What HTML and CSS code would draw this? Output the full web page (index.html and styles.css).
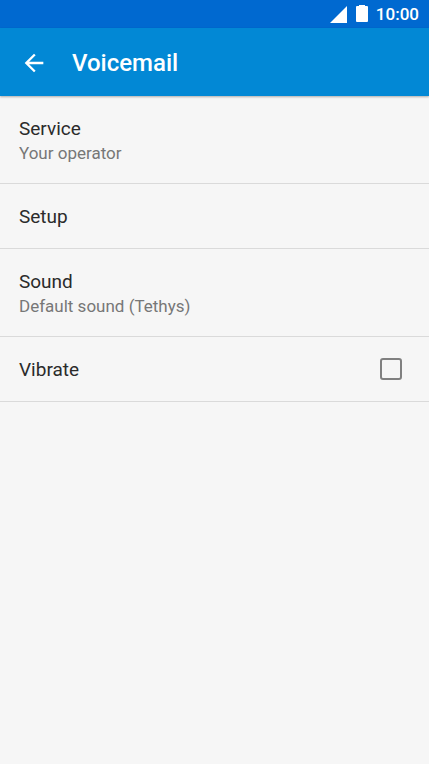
FILE: index.html
```html
<!DOCTYPE html>
<html lang="en">
<head>
<meta charset="utf-8">
<meta name="viewport" content="width=device-width, initial-scale=1">
<title>Voicemail</title>
<link rel="stylesheet" href="styles.css">
</head>
<body>
<div class="status">
  <svg class="signal" viewBox="0 0 17 18" aria-hidden="true"><path d="M17 1v17H0z"/></svg>
  <svg class="battery" viewBox="0 0 12 18" aria-hidden="true"><path d="M3 0h6v1h2q1 0 1 1v14q0 1-1 1H1q-1 0-1-1V2q0-1 1-1h2z"/></svg>
  <span>10:00</span>
</div>
<header class="appbar">
  <button class="back" type="button" aria-label="Back">
    <svg viewBox="0 0 24 24" aria-hidden="true"><path d="M20 11H7.830l5.590-5.590L12 4l-8 8 8 8 1.410-1.410L7.830 13H20z"/></svg>
  </button>
  <h1>Voicemail</h1>
</header>
<main class="settings">
  <button class="row" type="button"><span class="title">Service</span><span class="summary">Your operator</span></button>
  <button class="row" type="button"><span class="title">Setup</span></button>
  <button class="row" type="button"><span class="title">Sound</span><span class="summary">Default sound (Tethys)</span></button>
  <label class="row toggle"><span class="title">Vibrate</span><input type="checkbox"></label>
</main>
</body>
</html>
```
FILE: styles.css
```css
* { box-sizing: border-box; }
body {
  margin: 0;
  min-height: 100vh;
  background: #f6f6f6;
  color: #2b2b2b;
  font-family: Roboto, sans-serif;
}
button {
  border: 0;
  background: none;
  color: inherit;
  font: inherit;
}
.status {
  display: flex;
  align-items: center;
  justify-content: flex-end;
  height: 28px;
  padding: 0 10px;
  background: #0069d0;
  color: #fff;
  font-size: 17px;
  font-weight: 500;
  line-height: 30px;
}
.status svg { height: 18px; fill: #fff; }
.signal { width: 17px; margin-right: 9px; }
.battery { width: 12px; margin-right: 8px; }
.appbar {
  display: flex;
  align-items: center;
  gap: 24px;
  height: 68px;
  padding: 2px 20px 0;
  background: #0288d5;
  color: #fff;
  box-shadow: 0 1px 2px rgba(0, 0, 0, 0.3);
}
.back { display: flex; padding: 0; }
.back svg { width: 28px; height: 28px; fill: #fff; }
h1 { margin: 0; font-size: 24px; font-weight: 500; line-height: 30px; }
.row {
  display: flex;
  flex-direction: column;
  align-items: flex-start;
  width: 100%;
  padding: 20px 19px 18px;
  border-bottom: 1px solid #dadada;
  text-align: left;
}
.title { font-size: 19px; line-height: 26px; }
.summary { color: #777; font-size: 17px; line-height: 23px; }
.toggle { flex-direction: row; align-items: center; justify-content: space-between; }
.toggle input {
  appearance: none;
  width: 22px;
  height: 22px;
  margin: 0 8px 2px 0;
  border: 2px solid #808080;
  border-radius: 3px;
}
```
